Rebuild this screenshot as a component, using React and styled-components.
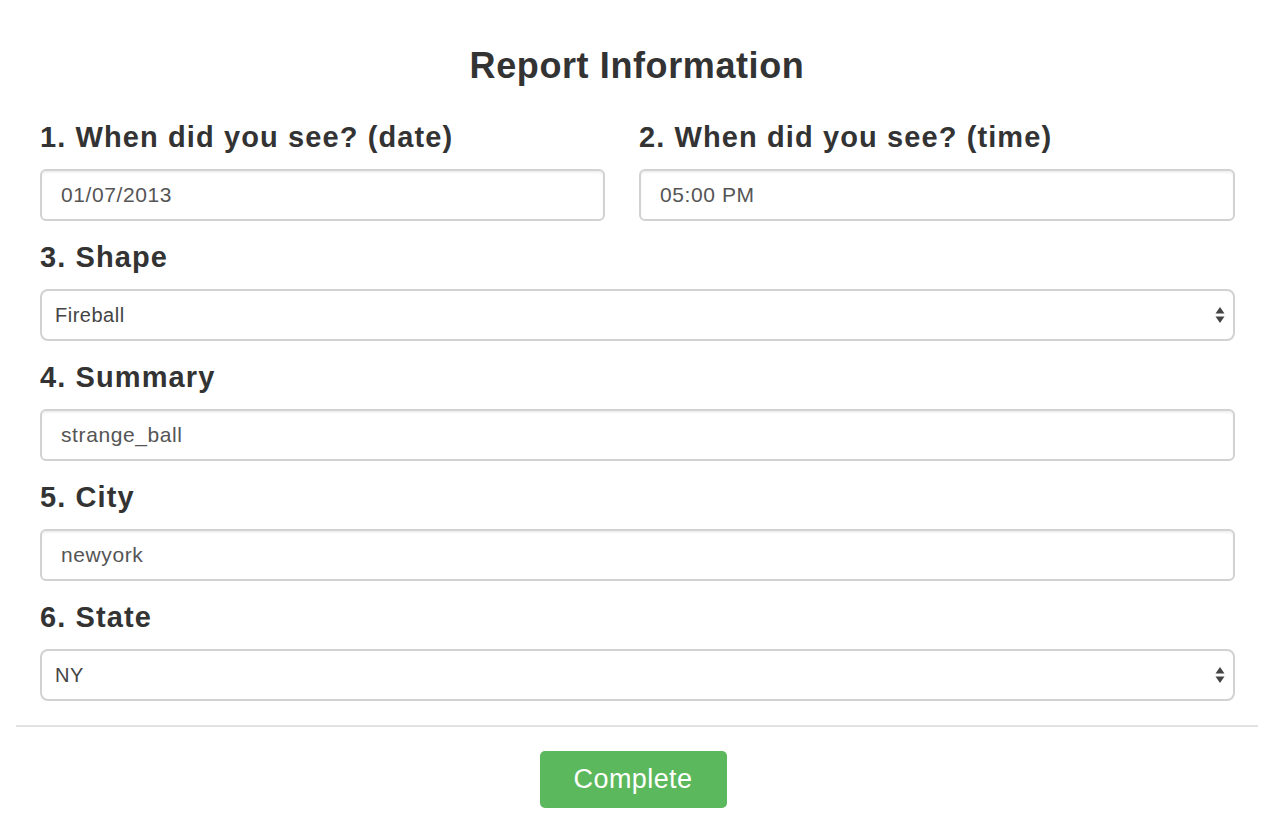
import React from 'react'
import styled, { createGlobalStyle } from 'styled-components'

const GlobalStyle = createGlobalStyle`
  html, body {
    margin: 0;
    padding: 0;
    background: #FFF;
  }
  body {
    font-family: "Liberation Sans", Arial, Helvetica, sans-serif;
    color: #333;
  }
`

const Page = styled.div`
  width: 1242px;
  margin: 0 0 0 16px;
  padding-top: 46px;
`

const Title = styled.h3`
  margin: 0;
  font-size: 36px;
  line-height: 40px;
  font-weight: bold;
  letter-spacing: 0.6px;
  text-align: center;
  color: #333;
`

const Form = styled.form`
  display: flex;
  flex-direction: column;
  gap: 20px;
  padding: 35px 23px 0 24px;
`

const Row = styled.div`
  display: flex;
  gap: 34px;
`

const Field = styled.div`
  display: flex;
  flex-direction: column;
  flex: ${p => p.$grow || 1} 1 0;
  min-width: 0;
`

const Label = styled.label`
  font-size: 29px;
  line-height: 32px;
  font-weight: bold;
  margin-bottom: 16px;
  color: #333;
  letter-spacing: 1.1px;
`

const Input = styled.input`
  box-sizing: border-box;
  height: 52px;
  width: 100%;
  padding: 0 19px;
  font-family: "Liberation Sans", Arial, Helvetica, sans-serif;
  font-size: 21px;
  letter-spacing: 0.6px;
  color: #555;
  background: #FFF;
  border: 2px solid #d2d2d2;
  border-radius: 6px;
  box-shadow: inset 0 2px 2px rgba(0, 0, 0, 0.06);
  outline: none;
`

const SelectWrap = styled.div`
  position: relative;
`

const Select = styled.select`
  box-sizing: border-box;
  appearance: none;
  -webkit-appearance: none;
  height: 52px;
  width: 100%;
  padding: 0 40px 0 13px;
  font-family: "Liberation Sans", Arial, Helvetica, sans-serif;
  font-size: 20px;
  letter-spacing: 0.5px;
  color: #444;
  background: #FFF;
  border: 2px solid #d2d2d2;
  border-radius: 8px;
  outline: none;
`

const Arrows = styled.svg`
  position: absolute;
  right: 9px;
  top: 50%;
  margin-top: -9px;
  pointer-events: none;
`

const Divider = styled.hr`
  border: 0;
  border-top: 2px solid #e2e2e2;
  margin: 24px 0 24px;
`

const Actions = styled.div`
  display: flex;
  justify-content: center;
  padding-right: 8px;
`

const Button = styled.button`
  width: 187px;
  height: 57px;
  border: 0;
  border-radius: 5px;
  background: #5cb85c;
  color: #FFF;
  font-family: "Liberation Sans", Arial, Helvetica, sans-serif;
  font-size: 27px;
  letter-spacing: 0.4px;
  cursor: pointer;
`

const SelectField = ({ value, options }) => (
  <SelectWrap>
    <Select defaultValue={value}>
      {options.map(o => <option key={o}>{o}</option>)}
    </Select>
    <Arrows width="12" height="18" viewBox="0 0 12 18">
      <path d="M6 1 L10.5 7.5 L1.5 7.5 Z" fill="#444" />
      <path d="M6 17 L10.5 10.5 L1.5 10.5 Z" fill="#444" />
    </Arrows>
  </SelectWrap>
)

const App = () => (
  <>
    <GlobalStyle />
    <Page>
      <Title>Report Information</Title>
      <Form onSubmit={e => e.preventDefault()}>
        <Row>
          <Field $grow={565}>
            <Label>1. When did you see? (date)</Label>
            <Input defaultValue="01/07/2013" />
          </Field>
          <Field $grow={596}>
            <Label>2. When did you see? (time)</Label>
            <Input defaultValue="05:00 PM" />
          </Field>
        </Row>
        <Field>
          <Label>3. Shape</Label>
          <SelectField value="Fireball" options={['Fireball', 'Disk', 'Light', 'Triangle']} />
        </Field>
        <Field>
          <Label>4. Summary</Label>
          <Input defaultValue="strange_ball" />
        </Field>
        <Field>
          <Label>5. City</Label>
          <Input defaultValue="newyork" />
        </Field>
        <Field>
          <Label>6. State</Label>
          <SelectField value="NY" options={['NY', 'CA', 'TX', 'WA']} />
        </Field>
      </Form>
      <Divider />
      <Actions>
        <Button type="button">Complete</Button>
      </Actions>
    </Page>
  </>
)

export default App
